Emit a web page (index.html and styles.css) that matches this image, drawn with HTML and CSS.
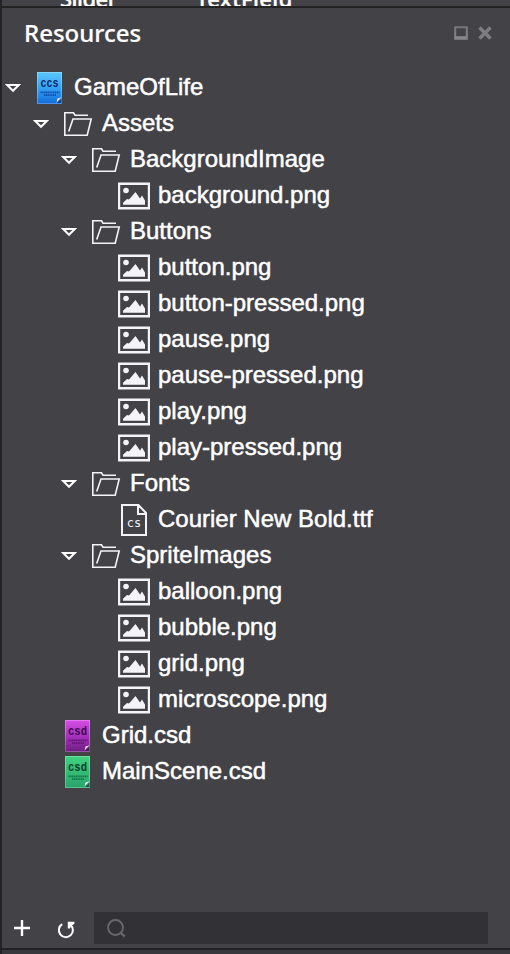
FILE: index.html
```
<!DOCTYPE html>
<html lang="en">
<head>
<meta charset="utf-8">
<title>Resources</title>
<link rel="stylesheet" href="styles.css">
</head>
<body>
<svg class="defs" aria-hidden="true">
  <defs>
    <linearGradient id="blue" x1="0" y1="0" x2="0" y2="1"><stop offset="0" stop-color="#5cc8ff"/><stop offset=".5" stop-color="#35a2f2"/><stop offset="1" stop-color="#126cdb"/></linearGradient>
    <linearGradient id="purple" x1="0" y1="0" x2="0" y2="1"><stop offset="0" stop-color="#d64ee8"/><stop offset=".5" stop-color="#a832bd"/><stop offset="1" stop-color="#6c1d80"/></linearGradient>
    <linearGradient id="green" x1="0" y1="0" x2="0" y2="1"><stop offset="0" stop-color="#3fd17e"/><stop offset="1" stop-color="#2aa56c"/></linearGradient>
    <linearGradient id="grey" x1="0" y1="0" x2="0" y2="1"><stop offset="0" stop-color="#77777a"/><stop offset="1" stop-color="#88888b"/></linearGradient>
    <symbol id="arrow" viewBox="0 0 16 32"><path d="M2.2 13h11.6L8 18.8z" fill="none" stroke="#fff" stroke-width="2"/></symbol>
    <symbol id="folder" viewBox="0 0 32 32"><path d="M26 7.2H13L11.5 4.8H2.8V27.2H25.2L29.2 11H11L6.7 23.5" fill="none" stroke="#f4f4f8" stroke-width="1.6"/></symbol>
    <symbol id="image" viewBox="0 0 32 32"><path d="M1 3.7h30v24.6H1z" fill="none" stroke="#f4f4f8" stroke-width="2.4"/><circle cx="8" cy="10.5" r="2.8" fill="#f4f4f8"/><path d="M5 24.7v-2L9 19l2 .5L17.5 12l4.5 6.5 2-3 3 5v4.2z" fill="#f4f4f8"/></symbol>
    <symbol id="file" viewBox="0 0 32 32"><path d="M4 1h16.5L28 9v22H4zM20 1v9h8" fill="none" stroke="#f4f4f8" stroke-width="2"/><text x="8.8" y="23" class="file-label" textLength="14.5" lengthAdjust="spacingAndGlyphs">cs</text></symbol>
    <symbol id="lines" viewBox="0 0 32 32"><path d="M6.5 20.3h19M10 23.2h12" stroke="currentColor" stroke-width="1.8" stroke-dasharray="1.3 .5"/><path d="M22.5 30.5l1-4 4-1.2z" fill="#eef"/><path d="M23 31l5-5v5z" fill="#223" opacity=".6"/><path d="M3.5.5h24v31h-24z" fill="none" stroke="#fff" opacity=".25"/></symbol>
  </defs>
</svg>
<div class="window">
  <div class="strip"><span class="slider">Slider</span><span class="field">TextField</span></div>
  <section class="panel">
    <header class="head">
      <h1>Resources</h1>
      <svg class="controls" width="40" height="18"><path d="M1.2 3.2h11.6v11.6H1.2z" fill="none" stroke="url(#grey)" stroke-width="2"/><path d="M2 13.2h10" stroke="#88888b" stroke-width="2"/><path d="M25.5 3.5l11 11M36.5 3.5l-11 11" stroke="#7d7d80" stroke-width="3.6"/></svg>
    </header>
    <div class="tree">
      <div class="row l0"><svg class="arrow"><use href="#arrow"/></svg><svg class="icon blue"><path d="M3 0h25v32H3z" fill="url(#blue)"/><text class="label" x="6.5" y="15" textLength="18" lengthAdjust="spacingAndGlyphs">ccs</text><use href="#lines"/></svg><span>GameOfLife</span></div>
      <div class="row l1"><svg class="arrow"><use href="#arrow"/></svg><svg class="icon"><use href="#folder"/></svg><span>Assets</span></div>
      <div class="row l2"><svg class="arrow"><use href="#arrow"/></svg><svg class="icon"><use href="#folder"/></svg><span>BackgroundImage</span></div>
      <div class="row l3 leaf"><svg class="icon"><use href="#image"/></svg><span>background.png</span></div>
      <div class="row l2"><svg class="arrow"><use href="#arrow"/></svg><svg class="icon"><use href="#folder"/></svg><span>Buttons</span></div>
      <div class="row l3 leaf"><svg class="icon"><use href="#image"/></svg><span>button.png</span></div>
      <div class="row l3 leaf"><svg class="icon"><use href="#image"/></svg><span>button-pressed.png</span></div>
      <div class="row l3 leaf"><svg class="icon"><use href="#image"/></svg><span>pause.png</span></div>
      <div class="row l3 leaf"><svg class="icon"><use href="#image"/></svg><span>pause-pressed.png</span></div>
      <div class="row l3 leaf"><svg class="icon"><use href="#image"/></svg><span>play.png</span></div>
      <div class="row l3 leaf"><svg class="icon"><use href="#image"/></svg><span>play-pressed.png</span></div>
      <div class="row l2"><svg class="arrow"><use href="#arrow"/></svg><svg class="icon"><use href="#folder"/></svg><span>Fonts</span></div>
      <div class="row l3 leaf"><svg class="icon"><use href="#file"/></svg><span>Courier New Bold.ttf</span></div>
      <div class="row l2"><svg class="arrow"><use href="#arrow"/></svg><svg class="icon"><use href="#folder"/></svg><span>SpriteImages</span></div>
      <div class="row l3 leaf"><svg class="icon"><use href="#image"/></svg><span>balloon.png</span></div>
      <div class="row l3 leaf"><svg class="icon"><use href="#image"/></svg><span>bubble.png</span></div>
      <div class="row l3 leaf"><svg class="icon"><use href="#image"/></svg><span>grid.png</span></div>
      <div class="row l3 leaf"><svg class="icon"><use href="#image"/></svg><span>microscope.png</span></div>
      <div class="row l1 leaf"><svg class="icon purple"><path d="M3 0h25v32H3z" fill="url(#purple)"/><text class="label" x="6" y="15" textLength="19" lengthAdjust="spacingAndGlyphs">csd</text><use href="#lines"/></svg><span>Grid.csd</span></div>
      <div class="row l1 leaf"><svg class="icon green"><path d="M3 0h25v32H3z" fill="url(#green)"/><text class="label" x="6" y="15" textLength="19" lengthAdjust="spacingAndGlyphs">csd</text><use href="#lines"/></svg><span>MainScene.csd</span></div>
    </div>
    <footer class="foot">
      <svg class="plus" width="16" height="16"><path d="M8 0v16M0 8h16" stroke="#fff" stroke-width="2.4"/></svg>
      <svg class="reload" width="18" height="18"><path d="M5.2 3.2A7 7 0 1 0 13.6 4" fill="none" stroke="#fff" stroke-width="2"/><path d="M10.8 .8H17.4V2.8L14.8 4.6L12.8 7.4H10.8z" fill="#fff"/></svg>
      <div class="search"><svg width="20" height="20"><circle cx="8.5" cy="8.5" r="7.5" fill="none" stroke="#66666b" stroke-width="2"/><path d="M13.5 13.5l4.2 4.2" stroke="#66666b" stroke-width="2.4"/></svg></div>
    </footer>
  </section>
</div>
</body>
</html>
```

FILE: styles.css
```
* { box-sizing: border-box; }
body { margin: 0; background: #38373b; color: #fff; font-family: "Liberation Sans", sans-serif; }
.defs { position: absolute; width: 0; height: 0; }
.window { width: 510px; height: 954px; overflow: hidden; border-left: 2px solid #232324; }
.strip { height: 6px; overflow: hidden; background: #434246; display: flex; align-items: flex-end; padding-left: 58px; font: 500 22px/24px "Noto Sans", sans-serif; -webkit-text-stroke: .4px #fff; }
.strip span { margin-bottom: -4px; }
.strip .slider { width: 136px; letter-spacing: -.5px; }
.strip .field { letter-spacing: .4px; }
.panel { height: 944px; background: #434246; border-top: 2px solid #232324; border-bottom: 2px solid #232324; display: flex; flex-direction: column; }
.head { height: 61px; padding: 8px 15px 0 22px; display: flex; justify-content: space-between; align-items: flex-start; }
h1 { margin: 0; font: 500 24px/34px "Noto Sans", sans-serif; -webkit-text-stroke: .2px #fff; }
.controls { margin: 8px 1px 0 0; }
.tree { flex: 1; }
.row { height: 36px; display: flex; align-items: flex-start; font-size: 24px; line-height: 36px; white-space: nowrap; -webkit-text-stroke: .5px #fff; }
.l0 { padding-left: 3px; }
.l1 { padding-left: 31px; }
.l2 { padding-left: 59px; }
.l3 { padding-left: 87px; }
.arrow { width: 16px; height: 32px; margin: 3px 13px 0 0; flex: none; }
.icon { width: 32px; height: 32px; margin: 3px 8px 0 0; flex: none; -webkit-text-stroke: 0; }
.leaf .icon { margin-left: 29px; }
.blue { color: #0c4cae; }
.purple { color: #641578; }
.green { color: #147348; }
.label { font: bold 13px "Liberation Mono", monospace; }
.blue .label { fill: #09296b; }
.purple .label { fill: #3c0750; }
.green .label { fill: #083c28; }
.file-label { font: 13px "DejaVu Sans Mono", monospace; fill: #f4f4f8; }
.foot { height: 40px; margin-right: 20px; display: flex; align-items: flex-start; padding: 4px 0 0 12px; }
.plus { margin: 8px 27px 0 0; }
.reload { margin: 9px 19px 0 0; }
.search { flex: 1; height: 32px; margin-right: 2px; background: #323135; padding: 7px 0 0 13px; }
.search svg { display: block; }
```
